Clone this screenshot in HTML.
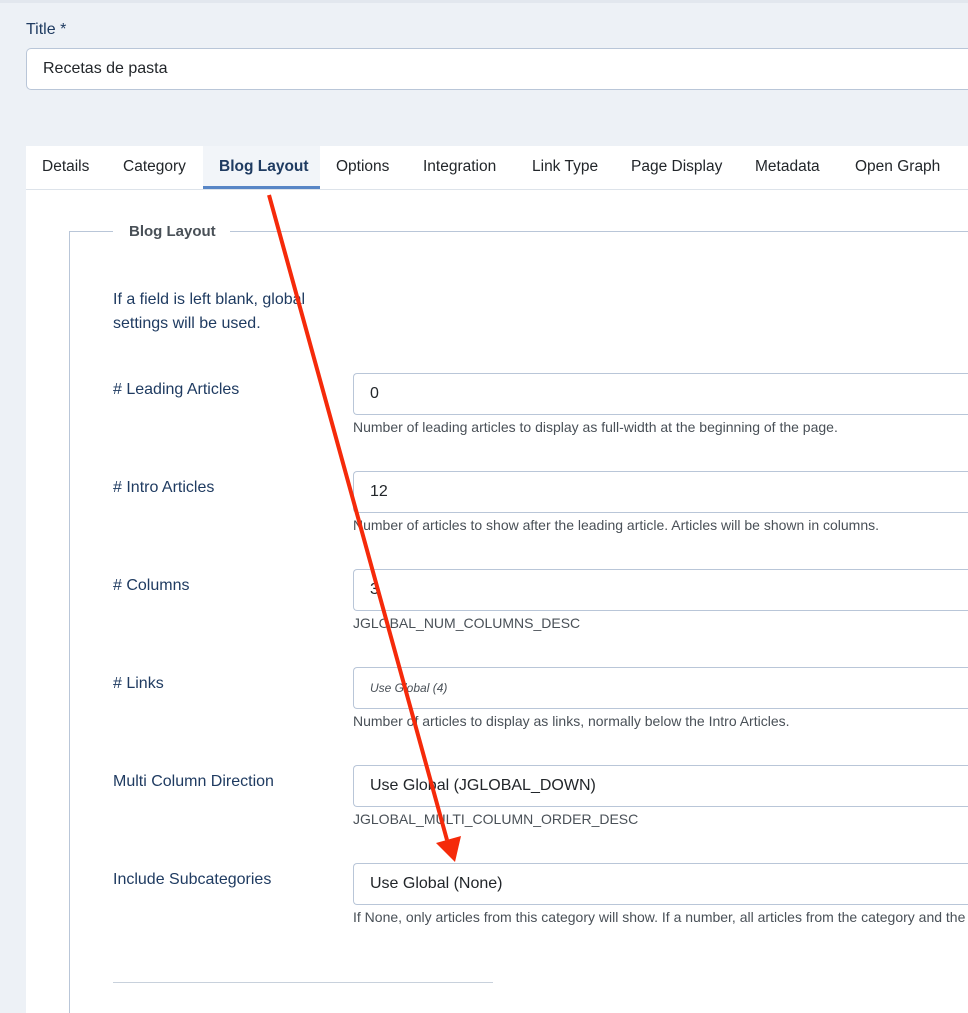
<!DOCTYPE html>
<html><head><style>
html,body{margin:0;width:968px;height:1013px;overflow:hidden}
body{background:#edf1f6;font-family:"Liberation Sans",sans-serif;position:relative}
.a{position:absolute}
.lbl{color:#1f3b61;font-size:16px}
.inp{position:absolute;left:353px;width:615px;height:42px;border:1px solid #b9c6d8;border-right:none;border-radius:4px 0 0 4px;background:#fff;box-sizing:border-box;font-size:16px;color:#22262a;padding:0 16px;line-height:40px;overflow:hidden}
.desc{position:absolute;left:353px;width:615px;overflow:hidden;font-size:14px;color:#495057;white-space:nowrap}
.tab{position:absolute;top:158px;font-size:15.5px;color:#22262a}
</style></head><body>
<div class="a" style="left:0;top:0;width:968px;height:3px;background:#e2e7ee"></div>
<div class="a lbl" style="left:26px;top:21px">Title *</div>
<div class="a" style="left:26px;top:48px;width:942px;height:42px;border:1px solid #b9c6d8;border-right:none;border-radius:5px 0 0 5px;background:#fff;box-sizing:border-box;font-size:16px;color:#22262a;padding-left:16px;line-height:40px">Recetas de pasta</div>
<div class="a" style="left:26px;top:146px;width:942px;height:867px;background:#fff"></div>
<div class="a" style="left:26px;top:189px;width:942px;height:1px;background:#dde3ea"></div>
<div class="a" style="left:203px;top:146px;width:117px;height:43px;background:#f2f5f9"></div>
<div class="a" style="left:203px;top:186px;width:117px;height:3px;background:#5886c6"></div>
<div class="tab" style="left:42px">Details</div>
<div class="tab" style="left:123px">Category</div>
<div class="tab" style="left:219px;font-weight:bold;color:#1f3b61">Blog Layout</div>
<div class="tab" style="left:336px">Options</div>
<div class="tab" style="left:423px">Integration</div>
<div class="tab" style="left:532px">Link Type</div>
<div class="tab" style="left:631px">Page Display</div>
<div class="tab" style="left:755px">Metadata</div>
<div class="tab" style="left:855px">Open Graph</div>
<div class="a" style="left:69px;top:231px;width:44px;height:1px;background:#b9c6d8"></div>
<div class="a" style="left:230px;top:231px;width:738px;height:1px;background:#b9c6d8"></div>
<div class="a" style="left:69px;top:231px;width:1px;height:782px;background:#b9c6d8"></div>
<div class="a" style="left:129px;top:223px;font-size:15px;font-weight:bold;color:#495057">Blog Layout</div>
<div class="a lbl" style="left:113px;top:288px;line-height:24px">If a field is left blank, global<br>settings will be used.</div>
<div class="a lbl" style="left:113px;top:381px"># Leading Articles</div>
<div class="inp" style="top:373px">0</div>
<div class="desc" style="top:419px">Number of leading articles to display as full-width at the beginning of the page.</div>
<div class="a lbl" style="left:113px;top:479px"># Intro Articles</div>
<div class="inp" style="top:471px">12</div>
<div class="desc" style="top:517px">Number of articles to show after the leading article. Articles will be shown in columns.</div>
<div class="a lbl" style="left:113px;top:577px"># Columns</div>
<div class="inp" style="top:569px">3</div>
<div class="desc" style="top:615px">JGLOBAL_NUM_COLUMNS_DESC</div>
<div class="a lbl" style="left:113px;top:675px"># Links</div>
<div class="inp" style="top:667px;font-size:12px;font-style:italic;color:#495057">Use Global (4)</div>
<div class="desc" style="top:713px">Number of articles to display as links, normally below the Intro Articles.</div>
<div class="a lbl" style="left:113px;top:773px">Multi Column Direction</div>
<div class="inp" style="top:765px">Use Global (JGLOBAL_DOWN)</div>
<div class="desc" style="top:811px">JGLOBAL_MULTI_COLUMN_ORDER_DESC</div>
<div class="a lbl" style="left:113px;top:871px">Include Subcategories</div>
<div class="inp" style="top:863px">Use Global (None)</div>
<div class="desc" style="top:909px">If None, only articles from this category will show. If a number, all articles from the category and the subcategories up to that level will show.</div>
<div class="a" style="left:113px;top:982px;width:380px;height:1px;background:#c8d1dc"></div>
<svg class="a" style="left:0;top:0" width="968" height="1013"><line x1="269" y1="195" x2="447" y2="840" stroke="#f52a0a" stroke-width="4"/><polygon points="436,843 461,836 455,862" fill="#f52a0a"/></svg>
</body></html>
